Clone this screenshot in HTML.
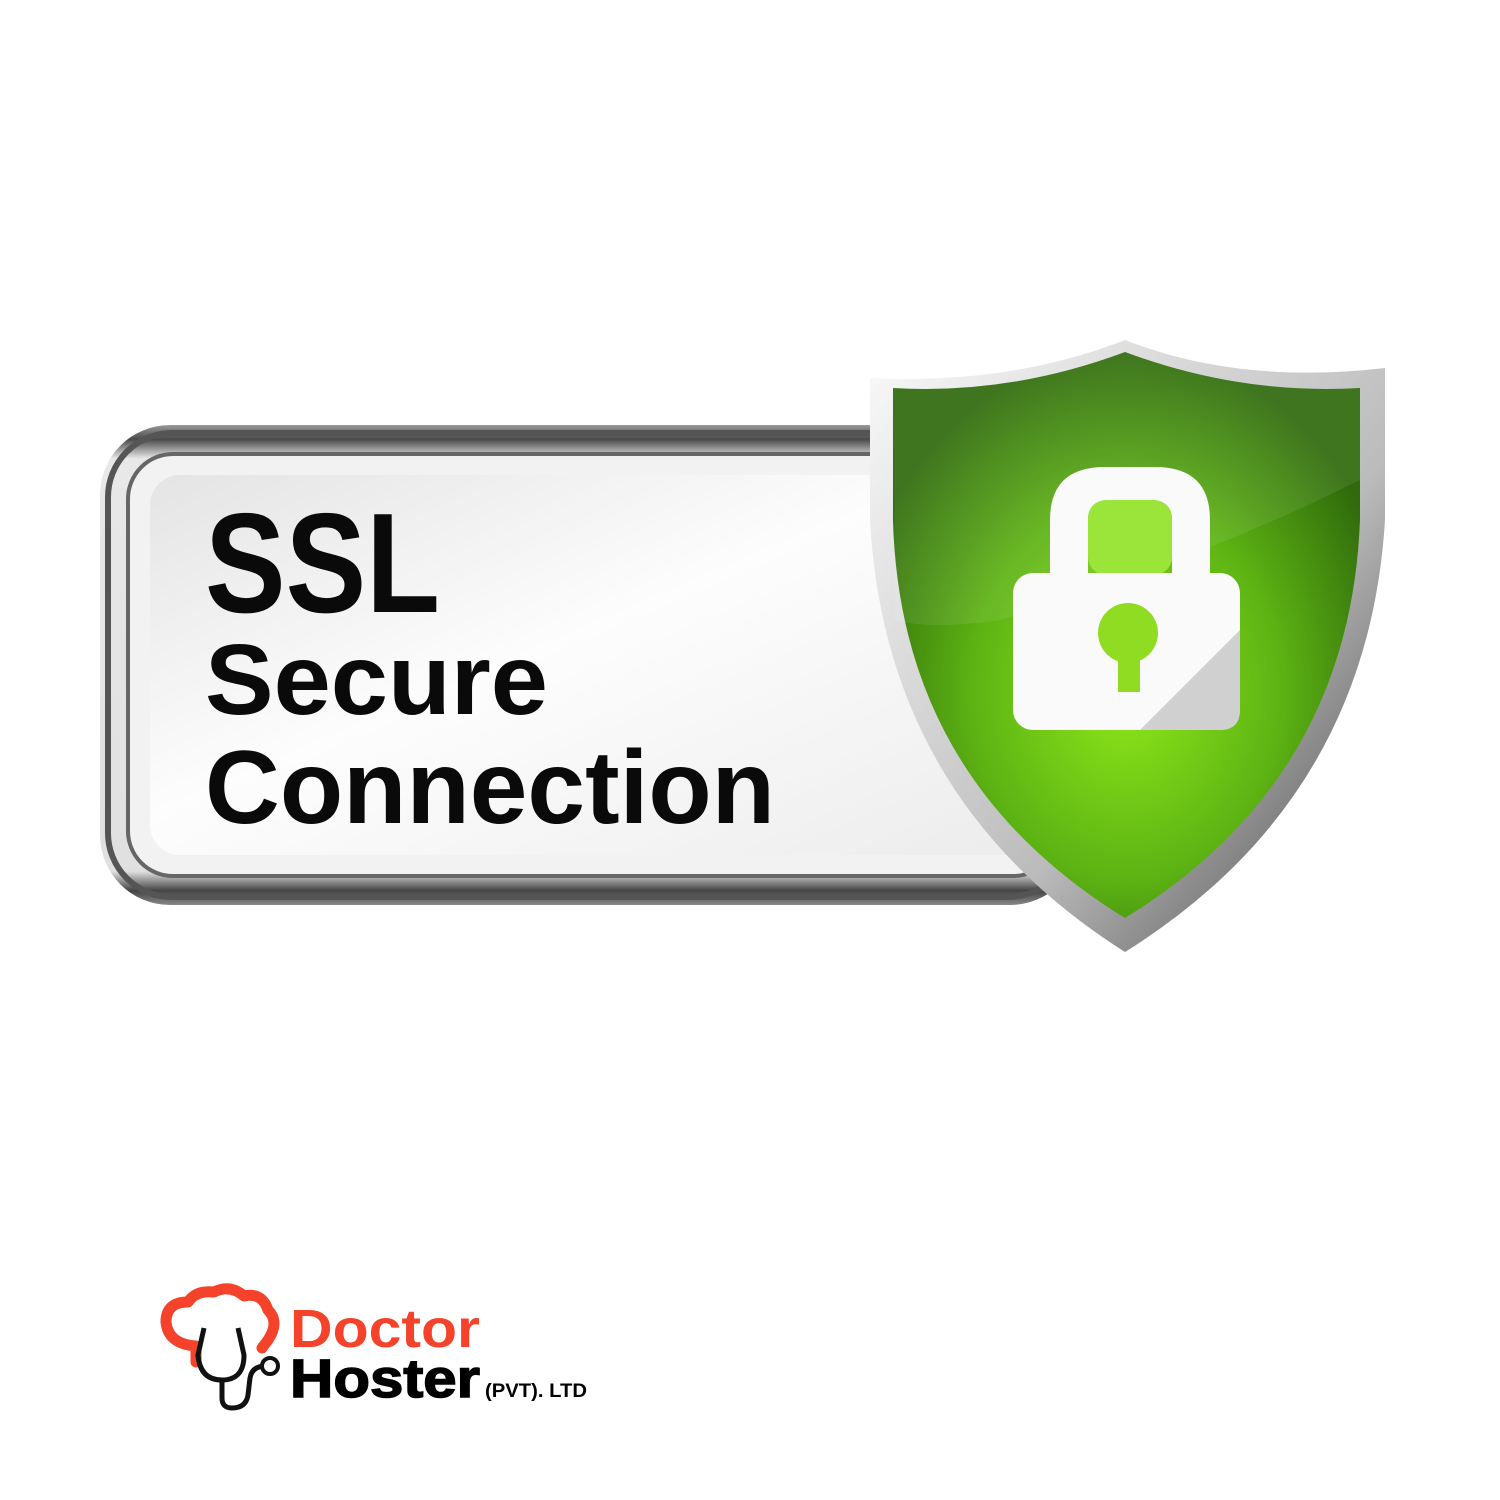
<!DOCTYPE html>
<html><head><meta charset="utf-8"><style>html,body{margin:0;padding:0;background:#fff}svg{display:block}</style></head>
<body>
<svg width="1500" height="1500" viewBox="0 0 1500 1500" xmlns="http://www.w3.org/2000/svg">
<defs>
<linearGradient id="frame" x1="0" y1="0" x2="0" y2="1">
<stop offset="0" stop-color="#9a9a9a"/><stop offset="0.03" stop-color="#4a4a4a"/><stop offset="0.07" stop-color="#e8e8e8"/><stop offset="0.93" stop-color="#e0e0e0"/><stop offset="0.97" stop-color="#444"/><stop offset="1" stop-color="#888"/>
</linearGradient>
<linearGradient id="panel" x1="0" y1="0" x2="1" y2="1">
<stop offset="0" stop-color="#e4e4e4"/><stop offset="0.45" stop-color="#fdfdfd"/><stop offset="1" stop-color="#ececec"/>
</linearGradient>
<radialGradient id="green" cx="0.5" cy="0.6" r="0.6">
<stop offset="0" stop-color="#8fe81a"/><stop offset="0.55" stop-color="#5db313"/><stop offset="1" stop-color="#2f6a0c"/>
</radialGradient>
<linearGradient id="rim" x1="0" y1="0" x2="1" y2="1">
<stop offset="0" stop-color="#fafafa"/><stop offset="0.6" stop-color="#bbb"/><stop offset="1" stop-color="#444"/>
</linearGradient>
</defs>
<rect x="100" y="425" width="980" height="480" rx="70" fill="url(#frame)"/>
<rect x="108" y="433" width="964" height="464" rx="64" fill="none" stroke="#555" stroke-width="6"/>
<rect x="128" y="454" width="930" height="422" rx="45" fill="#f2f2f2" stroke="#666" stroke-width="4"/>
<rect x="150" y="475" width="890" height="380" rx="30" fill="url(#panel)"/>
<text x="205" y="612" font-family="Liberation Sans, sans-serif" font-weight="bold" font-size="142" textLength="235" lengthAdjust="spacingAndGlyphs" fill="#0a0a0a">SSL</text>
<text x="205" y="714" font-family="Liberation Sans, sans-serif" font-weight="bold" font-size="100" textLength="343" lengthAdjust="spacingAndGlyphs" fill="#0a0a0a">Secure</text>
<text x="205" y="823" font-family="Liberation Sans, sans-serif" font-weight="bold" font-size="104" textLength="570" lengthAdjust="spacingAndGlyphs" fill="#0a0a0a">Connection</text>
<path d="M1125,340 Q1010,385 870,378 L870,520 Q885,800 1125,952 Q1368,800 1385,520 L1385,368 Q1240,385 1125,340Z" fill="url(#rim)"/>
<path d="M1125,352 Q1010,395 893,388 L893,520 Q900,780 1125,918 Q1350,780 1360,520 L1360,388 Q1240,395 1125,352Z" fill="url(#green)"/>
<path d="M893,388 Q1010,395 1125,352 Q1240,395 1360,388 L1360,480 Q1200,560 1000,620 Q930,630 895,620Z" fill="#ffffff" opacity="0.08"/>
<path d="M1050,575 L1050,520 Q1050,467 1105,467 L1155,467 Q1210,467 1210,520 L1210,575 L1172,575 L1172,520 Q1172,500 1150,500 L1110,500 Q1088,500 1088,520 L1088,575Z" fill="#fafafa"/>
<rect x="1088" y="500" width="84" height="75" rx="18" fill="#9be53a"/>
<rect x="1013" y="573" width="227" height="157" rx="20" fill="#fafafa"/>
<path d="M1140,730 L1240,630 L1240,710 Q1240,730 1220,730Z" fill="#d0d0d0"/>
<circle cx="1128" cy="633" r="30" fill="#8fdc22"/>
<rect x="1118" y="640" width="22" height="52" fill="#8fdc22"/>
<!-- logo -->
<path d="M196,1362 L196,1346 Q168,1344 166,1322 Q166,1302 188,1302 Q196,1290 214,1292 Q230,1284 244,1296 Q262,1292 268,1310 Q280,1322 268,1340 L262,1348" fill="none" stroke="#f4432a" stroke-width="11" stroke-linecap="round" stroke-linejoin="round"/>
<path d="M204,1328 L198,1355 Q200,1380 222,1380 Q244,1380 244,1355 L238,1328" fill="none" stroke="#111" stroke-width="5"/>
<path d="M222,1380 L222,1398 Q222,1408 232,1408 Q246,1408 248,1395 L250,1378 Q252,1366 266,1366" fill="none" stroke="#111" stroke-width="5"/>
<circle cx="270" cy="1366" r="8" fill="#fff" stroke="#111" stroke-width="4"/>
<text x="290" y="1347" font-family="Liberation Sans, sans-serif" font-weight="bold" font-size="54" textLength="190" lengthAdjust="spacingAndGlyphs" fill="#f4432a">Doctor</text>
<text x="290" y="1397" font-family="Liberation Sans, sans-serif" font-weight="bold" font-size="54" textLength="190" lengthAdjust="spacingAndGlyphs" fill="#000" stroke="#000" stroke-width="1.5">Hoster</text>
<text x="485" y="1397" font-family="Liberation Sans, sans-serif" font-weight="bold" font-size="19" textLength="102" lengthAdjust="spacingAndGlyphs" fill="#000">(PVT). LTD</text>
</svg>
</body></html>
